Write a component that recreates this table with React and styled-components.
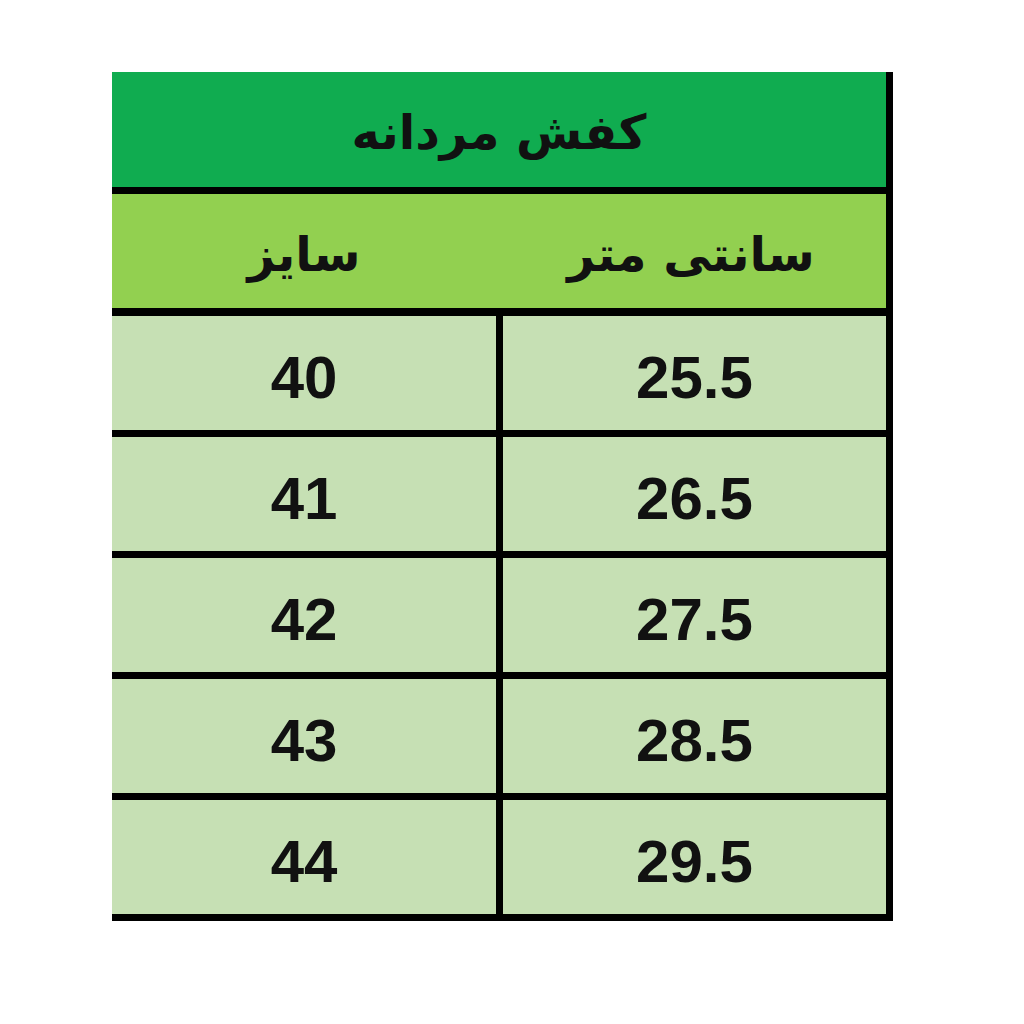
import styled, { createGlobalStyle } from "styled-components";

const GlobalStyle = createGlobalStyle`
	html, body {
		margin: 0;
		padding: 0;
		background: #ffffff;
	}
`;

const Page = styled.div`
	padding: 72px 0 0 112px;
`;

const Table = styled.div`
	width: 774px;
	border-right: 7px solid #000;
	direction: rtl;
	font-family: "Liberation Sans", "DejaVu Sans", sans-serif;
	font-weight: bold;
	color: #111;
`;

const Title = styled.div`
	height: 111px;
	padding-top: 4px;
	background: #10ac50;
	border-bottom: 7px solid #000;
	display: flex;
	align-items: center;
	justify-content: center;
	font-family: "DejaVu Sans", sans-serif;
	font-size: 48px;
`;

const Row = styled.div`
	display: grid;
	grid-template-columns: 390px 384px;
	height: ${(props) => props.h}px;
	background: ${(props) => props.bg};
	border-bottom: ${(props) => props.line}px solid #000;
`;

const Cell = styled.div`
	display: flex;
	align-items: center;
	justify-content: center;
	border-left: ${(props) => (props.divider ? "7px solid #000" : "none")};
	font-family: ${(props) =>
		props.fa ? `"DejaVu Sans", sans-serif` : `"Liberation Sans", sans-serif`};
	font-size: ${(props) => (props.fa ? 48 : 60)}px;
	padding-top: ${(props) => (props.fa ? 6 : 8)}px;
`;

const sizes = [
	{ eu: "40", cm: "25.5" },
	{ eu: "41", cm: "26.5" },
	{ eu: "42", cm: "27.5" },
	{ eu: "43", cm: "28.5" },
	{ eu: "44", cm: "29.5" },
];

export default function App() {
	return (
		<>
			<GlobalStyle />
			<Page>
				<Table>
					<Title>کفش مردانه</Title>
					<Row h={114} line={8} bg="#92d050">
						<Cell fa>سانتی متر</Cell>
						<Cell fa>سایز</Cell>
					</Row>
					{sizes.map((s) => (
						<Row key={s.eu} h={114} line={7} bg="#c6e0b4">
							<Cell divider>{s.cm}</Cell>
							<Cell>{s.eu}</Cell>
						</Row>
					))}
				</Table>
			</Page>
		</>
	);
}
